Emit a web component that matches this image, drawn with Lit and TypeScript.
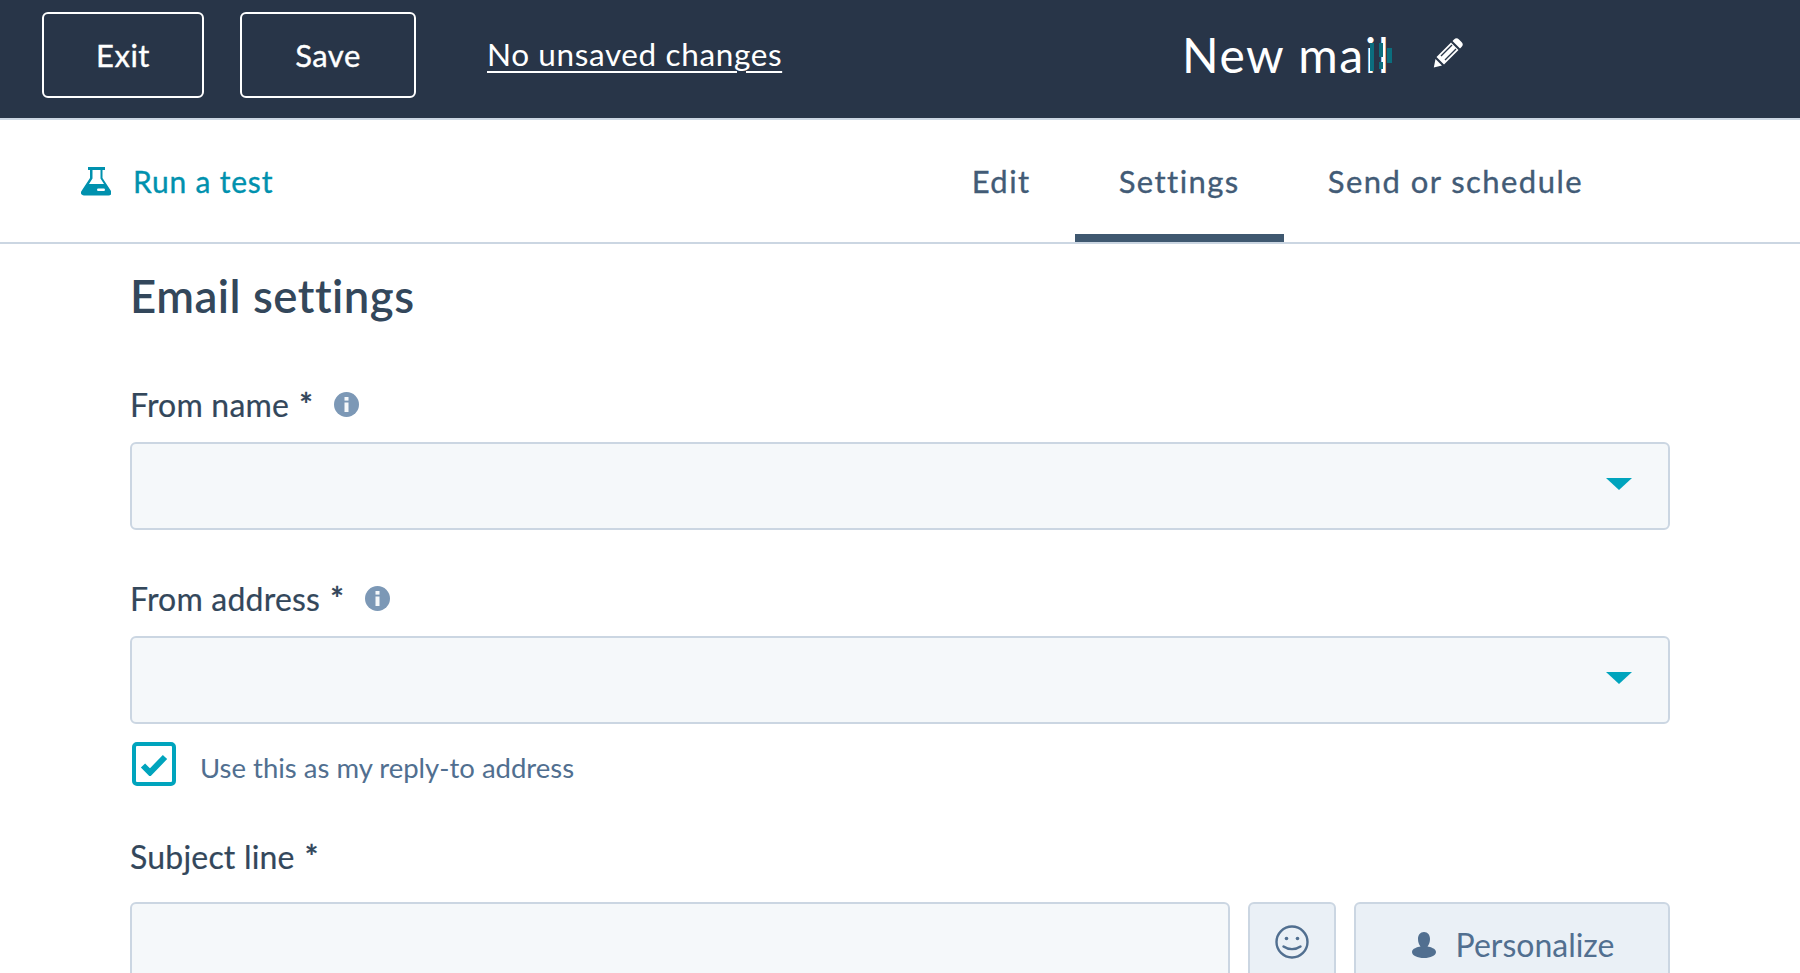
import { LitElement, html, css } from "lit";
import { customElement } from "lit/decorators.js";

const infoIcon = html`<svg class="info" viewBox="0 0 25 25"><circle cx="12.5" cy="12.5" r="12.5" fill="#7c98b6"/><rect x="10.5" y="5" width="4" height="3.6" fill="#f5f8fa"/><rect x="10.5" y="10.5" width="4" height="9.5" fill="#f5f8fa"/></svg>`;
const caret = html`<svg class="caret" viewBox="0 0 26 12"><path d="M0 0H26L13 12Z" fill="#00a4bd"/></svg>`;
const star = html`<b class="star">*</b>`;

@customElement("app-root")
export class AppRoot extends LitElement {
  static styles = css`
    :host { display: block; width: 1800px; height: 973px; overflow: hidden; background: #fff;
      font-family: "Lato", "Open Sans", sans-serif; color: #33475b; }
    * { box-sizing: border-box; }
    .top { height: 120px; background: #283548; border-bottom: 2px solid #cbd6e2; display: flex; align-items: flex-start; padding: 12px 0 0 42px; color: #fff; }
    .btn { height: 86px; border: 2px solid #fff; border-radius: 6px; display: flex; align-items: center; justify-content: center; font-size: 31px; letter-spacing: .5px; -webkit-text-stroke: .35px #fff; }
    .exit { width: 162px; margin-right: 36px; }
    .save { width: 176px; margin-right: 71px; }
    .saved { font-size: 31.5px; letter-spacing: .62px; text-decoration: underline; text-underline-offset: 5px; text-decoration-thickness: 2px; margin-top: 23px; line-height: 38px; width: 295px; white-space: nowrap; }
    .title { font-size: 48px; line-height: 60px; margin-left: 400px; margin-top: 13px; letter-spacing: 1.55px; width: 205px; white-space: nowrap; position: relative; }
    .blink { position: absolute; left: 188px; top: 11px; width: 24px; height: 36px; z-index: 1; }
    .pencil { width: 30px; height: 30px; margin-left: 46px; margin-top: 26px; }
    .bar { height: 124px; border-bottom: 2px solid #cbd6e2; display: flex; align-items: stretch; padding: 0 173px 0 81px; }
    .run { display: flex; align-items: center; color: #0091ae; font-size: 30px; letter-spacing: .8px; flex: 1; -webkit-text-stroke: .35px #0091ae; }
    .run svg { width: 30px; height: 30px; margin-right: 22px; }
    .tab { display: flex; align-items: center; padding: 8px 44px 0; font-size: 31px; color: #425b76; letter-spacing: 1.45px; border-bottom: 8px solid transparent; -webkit-text-stroke: .35px #425b76; }
    .tab.on { border-bottom-color: #3f5870; }
    .main { padding: 0 130px; }
    h1 { margin: 27px 0 0; font-size: 45.5px; line-height: 50px; font-weight: 600; color: #33475b; letter-spacing: .5px; }
    .label { display: flex; align-items: center; font-size: 32px; letter-spacing: .2px; line-height: 38px; height: 38px; color: #33475b; -webkit-text-stroke: .2px #33475b; }
    .label.first { margin-top: 65px; }
    .star { margin-left: 10px; }
    .label .info { width: 25px; height: 25px; margin-left: 21px; margin-top: -2px; }
    .sel { height: 88px; margin-top: 18px; border: 2px solid #cbd6e2; border-radius: 6px; background: #f5f8fa; display: flex; align-items: center; justify-content: flex-end; padding: 0 36px 0 0; }
    .caret { width: 26px; height: 12px; margin-bottom: 5px; }
    .second { margin-top: 50px; }
    .check { display: flex; align-items: center; margin-top: 18px; padding-left: 2px; font-size: 27.5px; color: #516f90; }
    .check span { margin-top: 6px; }
    .box { width: 44px; height: 44px; border: 4px solid #00a4bd; border-radius: 5px; margin-right: 24px; display: flex; align-items: center; justify-content: center; }
    .box svg { width: 30px; height: 24px; }
    .third { margin-top: 52px; }
    .row { display: flex; margin-top: 26px; gap: 18px; }
    .input { flex: 1; height: 120px; border: 2px solid #cbd6e2; border-radius: 6px; background: #f5f8fa; }
    .act { height: 120px; border: 2px solid #cbd6e2; border-radius: 6px; background: #eaf0f6; display: flex; justify-content: center; padding-top: 21px; color: #516f90; font-size: 32px; }
    .emoji { width: 88px; }
    .emoji svg { width: 34px; height: 34px; }
    .pers { width: 316px; padding-top: 20px; padding-left: 2px; align-items: flex-start; line-height: 42px; }
    .pers svg { width: 24px; height: 27px; margin-right: 20px; margin-top: 8px; }
  `;

  render() {
    return html`
      <div class="top">
        <div class="btn exit">Exit</div>
        <div class="btn save">Save</div>
        <div class="saved">No unsaved changes</div>
        <div class="title">
          New mail
          <svg class="blink" viewBox="0 0 24 36"><g fill="#0b6e7e"><rect x="0" y="7" width="4" height="28"/><rect x="9" y="7" width="4" height="14"/><rect x="9" y="26" width="4" height="7"/><rect x="17" y="12" width="5" height="15"/></g></svg>
        </div>
        <svg class="pencil" viewBox="0 0 30 30"><path d="M21 1.500a3.500 3.500 0 0 1 5 0l2.500 2.500a3.500 3.500 0 0 1 0 5L27 10.500 19.500 3ZM18 4.500 25.500 12 11 26.500 3.500 19ZM2.500 21 9 27.500 .8 29.500Z" fill="#fff"/><path d="M8 18 19 7M12 22 23 11" stroke="#283548" stroke-width="1.400"/></svg>
      </div>
      <div class="bar">
        <div class="run">
          <svg viewBox="0 0 30 30"><path d="M7 1h17v3h-2.500v8l8.500 13c1.500 2.500 0 4.500-2.500 4.500H3c-2.500 0-4-2-2.500-4.500L9 12V4H7Z" fill="#0091ae"/><path d="M11.500 4h8v8.500l3.500 5.500H8l3.500-5.500Z" fill="#fff"/><rect x="16" y="22.500" width="8" height="2.500" rx="1.200" fill="#fff"/></svg>
          Run a test
        </div>
        <div class="tab">Edit</div>
        <div class="tab on">Settings</div>
        <div class="tab">Send or schedule</div>
      </div>
      <div class="main">
        <h1>Email settings</h1>
        <div class="label first">From name${star}${infoIcon}</div>
        <div class="sel">${caret}</div>
        <div class="label second">From address${star}${infoIcon}</div>
        <div class="sel">${caret}</div>
        <div class="check">
          <div class="box"><svg viewBox="0 0 30 24"><path d="M4 13.500l7 7L26 5" fill="none" stroke="#00a4bd" stroke-width="6"/></svg></div>
          <span>Use this as my reply-to address</span>
        </div>
        <div class="label third">Subject line${star}</div>
        <div class="row">
          <div class="input"></div>
          <div class="act emoji"><svg viewBox="0 0 34 34" fill="none" stroke="#516f90" stroke-width="2.400"><circle cx="17" cy="17" r="15.500"/><path d="M8.500 21.500c5 3.500 12 3.500 17 0" stroke-linecap="round"/><circle cx="11.500" cy="13.500" r="1.800" fill="#516f90" stroke="none"/><circle cx="22.500" cy="13.500" r="1.800" fill="#516f90" stroke="none"/></svg></div>
          <div class="act pers"><svg viewBox="0 0 24 27"><path d="M12 0c3.800 0 6 3 6 7 0 3-1 5.500-2.500 7.500 3 .5 8.500 2 8.500 5.500 0 3.500-5.500 6-12 6S0 23.500 0 20c0-3.500 5.500-5 8.500-5.500C7 12.500 6 10 6 7c0-4 2.200-7 6-7Z" fill="#516f90"/></svg>Personalize</div>
        </div>
      </div>
    `;
  }
}
